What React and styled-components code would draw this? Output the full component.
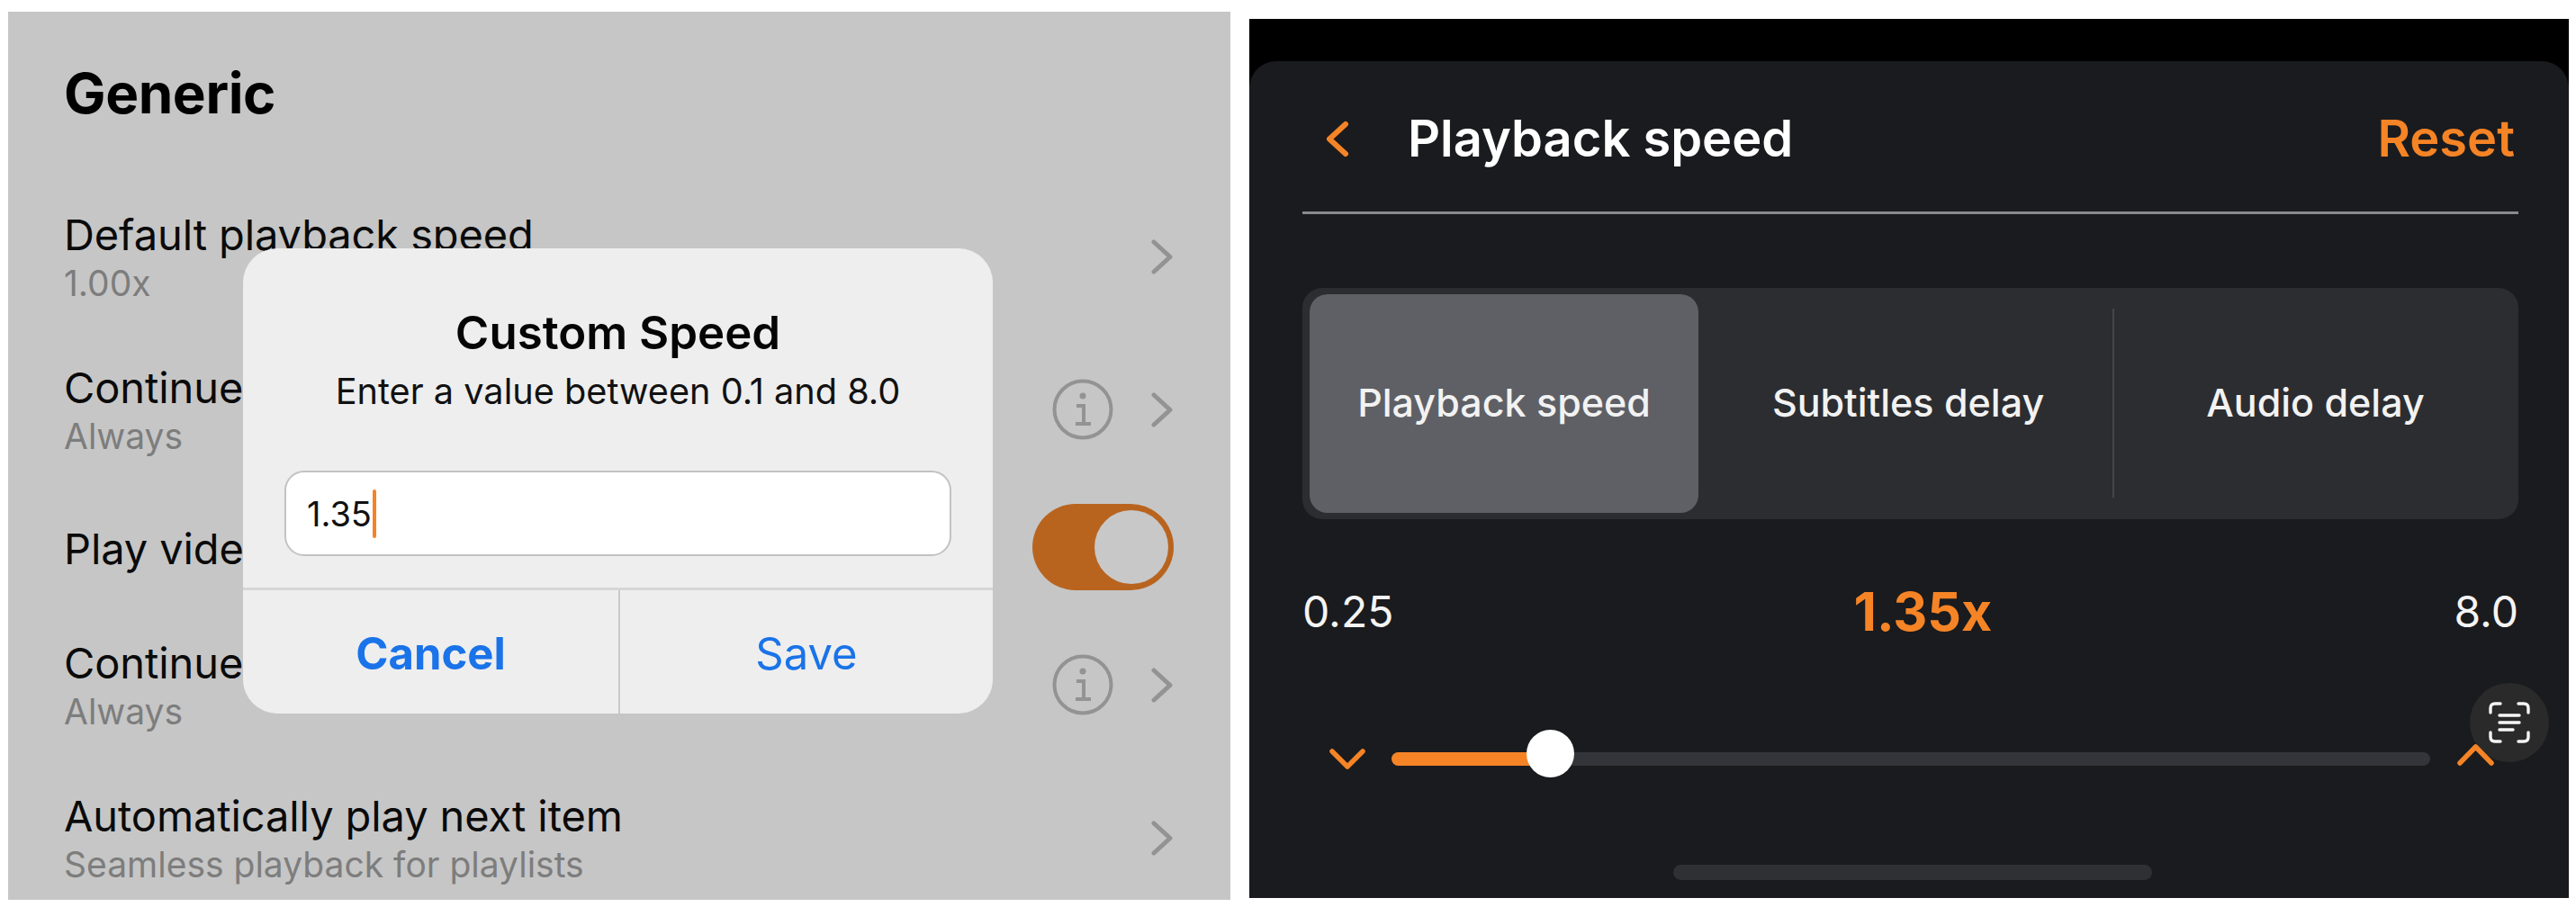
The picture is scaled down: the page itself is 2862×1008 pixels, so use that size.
import React from "react";
import styled, { createGlobalStyle } from "styled-components";

const orange = "#f58426";

const GlobalStyle = createGlobalStyle`
  html, body {
    margin: 0;
    padding: 0;
    background: #fff;
  }
  body {
    font-family: "Inter", "Liberation Sans", sans-serif;
  }
`;

const Page = styled.div`
  width: 2862px;
  height: 1008px;
  display: flex;
  align-items: flex-start;
  gap: 21px;
  padding-left: 9px;
  box-sizing: border-box;
  overflow: hidden;
`;

const SettingsPanel = styled.section`
  position: relative;
  flex: none;
  box-sizing: border-box;
  width: 1358px;
  height: 987px;
  margin-top: 13px;
  padding: 56px 63px 0 62px;
  background: #c6c6c6;
  overflow: hidden;
`;

const SettingsTitle = styled.h1`
  margin: 0 0 81px;
  height: 70px;
  font-size: 62px;
  line-height: 70px;
  font-weight: 700;
  letter-spacing: -0.4px;
  color: #000;
`;

const SettingsList = styled.div`
  display: flex;
  flex-direction: column;
  gap: 40px;
`;

const SettingsRow = styled.div`
  display: flex;
  align-items: center;
  justify-content: space-between;
  height: ${({ $height }) => $height}px;
`;

const RowText = styled.div`
  display: flex;
  flex-direction: column;
  padding-top: 3px;
`;

const RowTitle = styled.div`
  font-size: 47px;
  line-height: 54px;
  letter-spacing: -0.1px;
  color: #0a0a0a;
  white-space: nowrap;
`;

const RowSub = styled.div`
  margin-top: 3px;
  font-size: 39px;
  line-height: 48px;
  color: #7d7d7d;
  white-space: nowrap;
`;

const RowActions = styled.div`
  display: flex;
  align-items: center;
  gap: 42px;
`;

const Toggle = styled.div`
  box-sizing: border-box;
  width: 157px;
  height: 96px;
  padding: 7px 6px;
  display: flex;
  justify-content: flex-end;
  border-radius: 48px;
  background: #b8641f;
`;

const ToggleKnob = styled.div`
  width: 82px;
  height: 82px;
  border-radius: 50%;
  background: #c8c8c8;
`;

const Dialog = styled.div`
  position: absolute;
  left: 261px;
  top: 263px;
  width: 833px;
  height: 517px;
  display: flex;
  flex-direction: column;
  align-items: center;
  border-radius: 38px;
  background: #eeeeee;
  overflow: hidden;
`;

const DialogTitle = styled.div`
  margin-top: 64px;
  font-size: 51px;
  line-height: 60px;
  font-weight: 600;
  color: #050505;
`;

const DialogMessage = styled.div`
  margin-top: 12px;
  font-size: 39.7px;
  line-height: 46px;
  color: #111;
`;

const InputField = styled.div`
  box-sizing: border-box;
  width: 741px;
  height: 95px;
  margin-top: 65px;
  padding-left: 23px;
  display: flex;
  align-items: center;
  border: 2px solid #c2c2c2;
  border-radius: 22px;
  background: #fff;
  font-size: 38px;
  color: #111;
`;

const Caret = styled.span`
  width: 4px;
  height: 54px;
  margin-left: 1px;
  border-radius: 2px;
  background: ${orange};
`;

const DialogActions = styled.div`
  align-self: stretch;
  flex: 1;
  margin-top: 35px;
  display: grid;
  grid-template-columns: 417px 1fr;
  border-top: 3px solid #d6d6d6;
`;

const DialogButton = styled.div`
  display: flex;
  align-items: center;
  justify-content: center;
  padding-top: 4px;
  font-size: 49px;
  font-weight: ${({ $bold }) => ($bold ? 700 : 400)};
  color: #1a73e8;
  & + & {
    border-left: 2px solid #c9c9c9;
  }
`;

const PlayerPanel = styled.section`
  flex: none;
  box-sizing: border-box;
  width: 1466px;
  height: 977px;
  margin-top: 21px;
  padding-top: 47px;
  display: flex;
  background: #000;
`;

const Sheet = styled.div`
  position: relative;
  flex: 1;
  display: flex;
  flex-direction: column;
  box-sizing: border-box;
  padding: 0 56px 0 59px;
  border-radius: 30px 30px 0 0;
  background: #1a1b1e;
`;

const SheetHeader = styled.header`
  height: 170px;
  padding: 5px 4px 0 25px;
  display: flex;
  align-items: center;
  box-sizing: border-box;
  border-bottom: 3px solid #8a8a8c;
`;

const SheetTitle = styled.h2`
  flex: 1;
  margin: 0 0 0 65px;
  font-size: 56px;
  line-height: 70px;
  font-weight: 600;
  color: #fff;
`;

const ResetButton = styled.div`
  font-size: 56px;
  line-height: 70px;
  font-weight: 600;
  color: ${orange};
`;

const Segments = styled.div`
  box-sizing: border-box;
  height: 257px;
  margin-top: 82px;
  padding: 7px 0 7px 8px;
  display: grid;
  grid-template-columns: 432px 460px 1fr;
  border-radius: 22px;
  background: #2c2d31;
`;

const Segment = styled.div`
  display: flex;
  align-items: center;
  justify-content: center;
  padding-bottom: 3px;
  font-size: 43px;
  font-weight: 500;
  color: #f2f2f2;
  border-radius: 20px;
  background: ${({ $active }) => ($active ? "#5f6065" : "transparent")};
`;

const SegmentLabel = styled.span`
  margin-left: ${({ $shift }) => $shift}px;
`;

const SegmentDivider = styled(Segment)`
  position: relative;
  &::before {
    content: "";
    position: absolute;
    left: 0;
    top: 16px;
    bottom: 17px;
    width: 2px;
    background: #45464b;
  }
`;

const ValueRow = styled.div`
  display: flex;
  align-items: center;
  justify-content: space-between;
  height: 70px;
  margin-top: 67px;
`;

const RangeLabel = styled.div`
  font-size: 48px;
  color: #f4f4f4;
`;

const SpeedValue = styled.div`
  margin-left: -2px;
  font-size: 59px;
  font-weight: 700;
  color: ${orange};
`;

const SliderRow = styled.div`
  display: flex;
  align-items: center;
  height: 60px;
  margin-top: 99px;
  padding-left: 30px;
`;

const SliderTrack = styled.div`
  position: relative;
  width: 1154px;
  height: 15px;
  margin: 0 30px 0 29px;
  border-radius: 8px;
  background: #33353a;
`;

const SliderFill = styled.div`
  height: 100%;
  border-radius: 8px 0 0 8px;
  background: ${orange};
`;

const SliderThumb = styled.div`
  position: absolute;
  top: -25px;
  width: 53px;
  height: 53px;
  margin-left: -26px;
  border-radius: 50%;
  background: #fff;
`;

const UpChevron = styled.svg`
  position: relative;
  z-index: 1;
  margin-top: -10px;
`;

const ScanButton = styled.div`
  position: absolute;
  right: 22px;
  top: 691px;
  width: 88px;
  height: 88px;
  display: flex;
  align-items: center;
  justify-content: center;
  border-radius: 50%;
  background: #2a2a2b;
`;

const HomeBar = styled.div`
  width: 532px;
  height: 17px;
  margin: 88px 0 0 412px;
  border-radius: 9px;
  background: #2f3033;
`;

const ChevronRight = () => (
  <svg width="25" height="39" viewBox="0 0 25 39" fill="none">
    <path d="M3 3 L21 19.5 L3 36" stroke="#939393" strokeWidth="5" strokeLinecap="round" strokeLinejoin="round" />
  </svg>
);

const InfoIcon = () => (
  <svg width="68" height="68" viewBox="0 0 68 68" fill="none" stroke="#939393">
    <circle cx="34" cy="34" r="31.5" strokeWidth="4" />
    <circle cx="34" cy="19" r="3.5" fill="#939393" stroke="none" />
    <path d="M27 30 H35 V49 M26 50 H43" strokeWidth="4" />
  </svg>
);

const BackChevron = () => (
  <svg width="27" height="41" viewBox="0 0 27 41" fill="none">
    <path d="M23 4 L5 20.5 L23 37" stroke={orange} strokeWidth="6" strokeLinecap="round" strokeLinejoin="round" />
  </svg>
);

const DownChevron = () => (
  <svg width="40" height="25" viewBox="0 0 40 25" fill="none">
    <path d="M3 4 L20 21 L37 4" stroke={orange} strokeWidth="5.5" strokeLinecap="round" strokeLinejoin="round" />
  </svg>
);

const ScanTextIcon = () => (
  <svg width="46" height="46" viewBox="0 0 46 46" fill="none" stroke="#f5f5f5" strokeWidth="3.4" strokeLinecap="round">
    <path d="M2 12 V7 Q2 2 7 2 H13 M33 2 H39 Q44 2 44 7 V12 M2 34 V39 Q2 44 7 44 H13 M33 44 H39 Q44 44 44 39 V34" />
    <path d="M12 15 H34 M12 23 H34 M12 31 H27" />
  </svg>
);

const rows = [
  { title: "Default playback speed", sub: "1.00x" },
  { title: "Continue", sub: "Always", info: true },
  { title: "Play video", toggle: true },
  { title: "Continue", sub: "Always", info: true },
  { title: "Automatically play next item", sub: "Seamless playback for playlists" },
];

const App = () => {
  const thumbLeft = 176;
  return (
    <Page>
      <GlobalStyle />
      <SettingsPanel>
        <SettingsTitle>Generic</SettingsTitle>
        <SettingsList>
          {rows.map(({ title, sub, info, toggle }, i) => (
            <SettingsRow key={i} $height={toggle ? 96 : 130}>
              <RowText>
                <RowTitle>{title}</RowTitle>
                {sub && <RowSub>{sub}</RowSub>}
              </RowText>
              {toggle ? (
                <Toggle>
                  <ToggleKnob />
                </Toggle>
              ) : (
                <RowActions>
                  {info && <InfoIcon />}
                  <ChevronRight />
                </RowActions>
              )}
            </SettingsRow>
          ))}
        </SettingsList>
        <Dialog>
          <DialogTitle>Custom Speed</DialogTitle>
          <DialogMessage>Enter a value between 0.1 and 8.0</DialogMessage>
          <InputField>
            1.35
            <Caret />
          </InputField>
          <DialogActions>
            <DialogButton $bold>Cancel</DialogButton>
            <DialogButton>Save</DialogButton>
          </DialogActions>
        </Dialog>
      </SettingsPanel>
      <PlayerPanel>
        <Sheet>
          <SheetHeader>
            <BackChevron />
            <SheetTitle>Playback speed</SheetTitle>
            <ResetButton>Reset</ResetButton>
          </SheetHeader>
          <Segments>
            <Segment $active>Playback speed</Segment>
            <Segment>
              <SegmentLabel $shift={6}>Subtitles delay</SegmentLabel>
            </Segment>
            <SegmentDivider>Audio delay</SegmentDivider>
          </Segments>
          <ValueRow>
            <RangeLabel>0.25</RangeLabel>
            <SpeedValue>1.35x</SpeedValue>
            <RangeLabel>8.0</RangeLabel>
          </ValueRow>
          <SliderRow>
            <DownChevron />
            <SliderTrack>
              <SliderFill style={{ width: thumbLeft }} />
              <SliderThumb style={{ left: thumbLeft }} />
            </SliderTrack>
            <UpChevron width="41" height="25" viewBox="0 0 41 25" fill="none">
              <path d="M3 22 L20.5 4 L38 22" stroke={orange} strokeWidth="5.5" strokeLinecap="round" strokeLinejoin="round" />
            </UpChevron>
          </SliderRow>
          <HomeBar />
          <ScanButton>
            <ScanTextIcon />
          </ScanButton>
        </Sheet>
      </PlayerPanel>
    </Page>
  );
};

export default App;
